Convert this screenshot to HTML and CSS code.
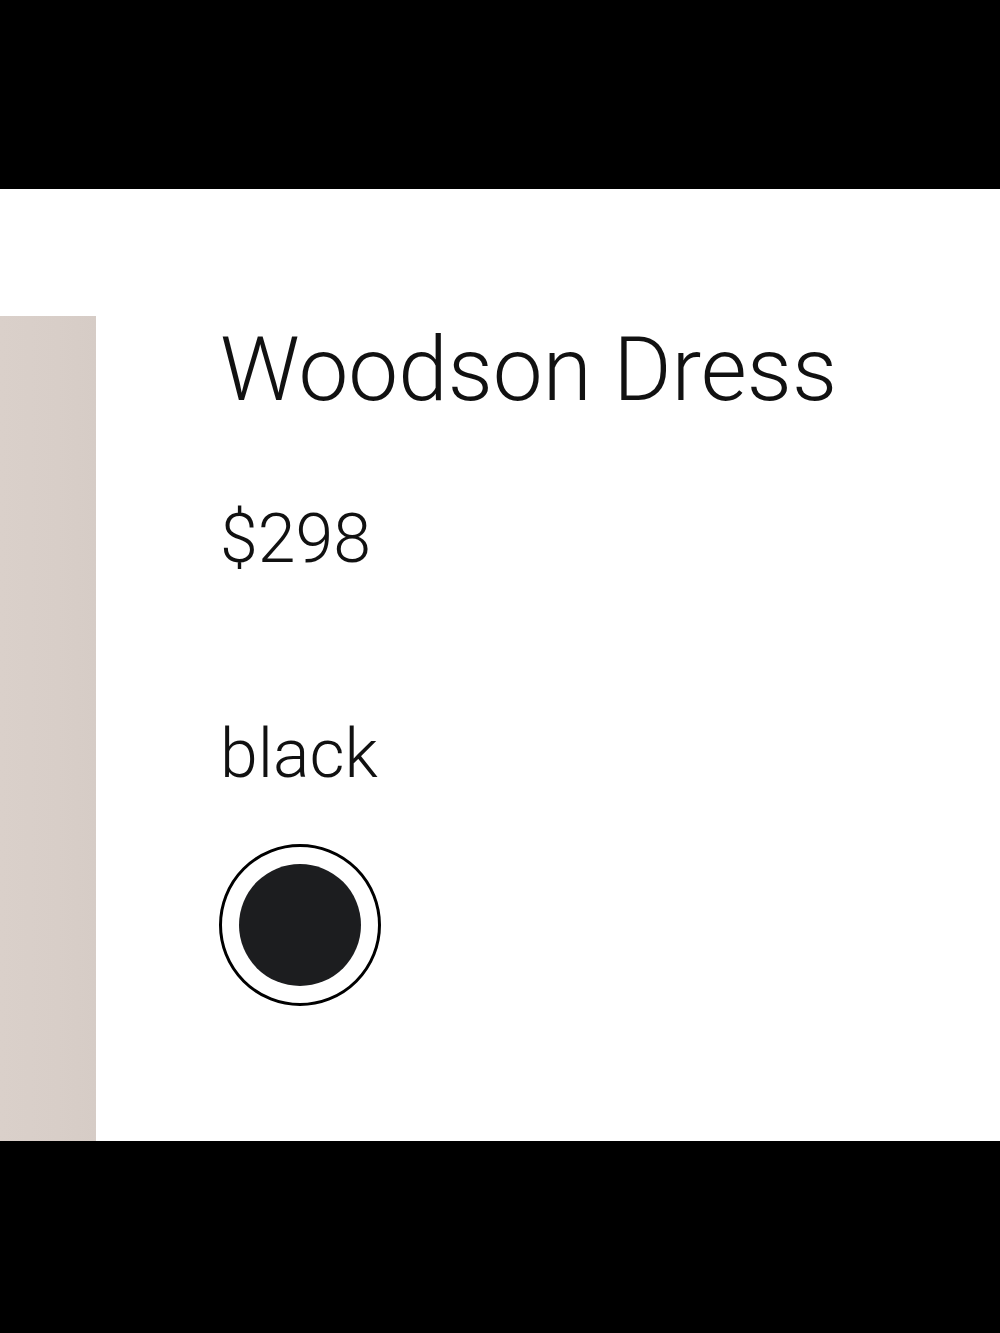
FILE: index.html
```html
<!DOCTYPE html>
<html lang="en">

<head>
    <meta charset="UTF-8">
    <meta name="viewport" content="width=device-width, initial-scale=1.0">
    <title>Woodson Dress</title>
    <link rel="stylesheet" href="styles.css">
</head>

<body>
    <div class="bar"></div>

    <main class="product">
        <!-- product photo, cropped to its right edge -->
        <div class="photo"></div>

        <div class="details">
            <h1 class="name">Woodson Dress</h1>
            <p class="price">$298</p>
            <p class="color-label">black</p>
            <button class="swatch selected" aria-label="black">
                <span class="swatch-fill"></span>
            </button>
        </div>
    </main>

    <div class="bar bar-bottom"></div>
</body>

</html>
```

FILE: styles.css
```css
body {
    font-family: Roboto, "Liberation Sans", Arial, sans-serif;
    font-weight: 300;
    background-color: #000;
    color: #111;
    margin: 0;
    padding: 0;
}

.bar {
    height: 189px;
    background-color: #000;
}

.bar-bottom {
    height: 192px;
}

.product {
    display: flex;
    height: 952px;
    padding-top: 127px;
    box-sizing: border-box;
    background-color: #fff;
}

.photo {
    width: 96px;
    flex-shrink: 0;
    background: linear-gradient(90deg, #dad0ca 0%, #d8cec8 60%, #d6ccc6 100%);
}

.details {
    display: flex;
    flex-direction: column;
    align-items: flex-start;
    padding-top: 9px;
    padding-left: 124px;
}

.name {
    font-size: 89px;
    font-weight: 300;
    line-height: 1;
    margin: 0;
}

.price {
    font-size: 68px;
    line-height: 1;
    margin: 91px 0 0;
}

.color-label {
    font-size: 68px;
    line-height: 1;
    margin: 147px 0 0;
}

.swatch {
    width: 162px;
    height: 162px;
    margin-top: 56px;
    margin-left: -1px;
    padding: 17px;
    border: 3px solid #000;
    border-radius: 50%;
    background-color: #fff;
    box-sizing: border-box;
    cursor: pointer;
}

.swatch-fill {
    display: block;
    width: 100%;
    height: 100%;
    border-radius: 50%;
    background-color: #1c1d1f;
}
```
